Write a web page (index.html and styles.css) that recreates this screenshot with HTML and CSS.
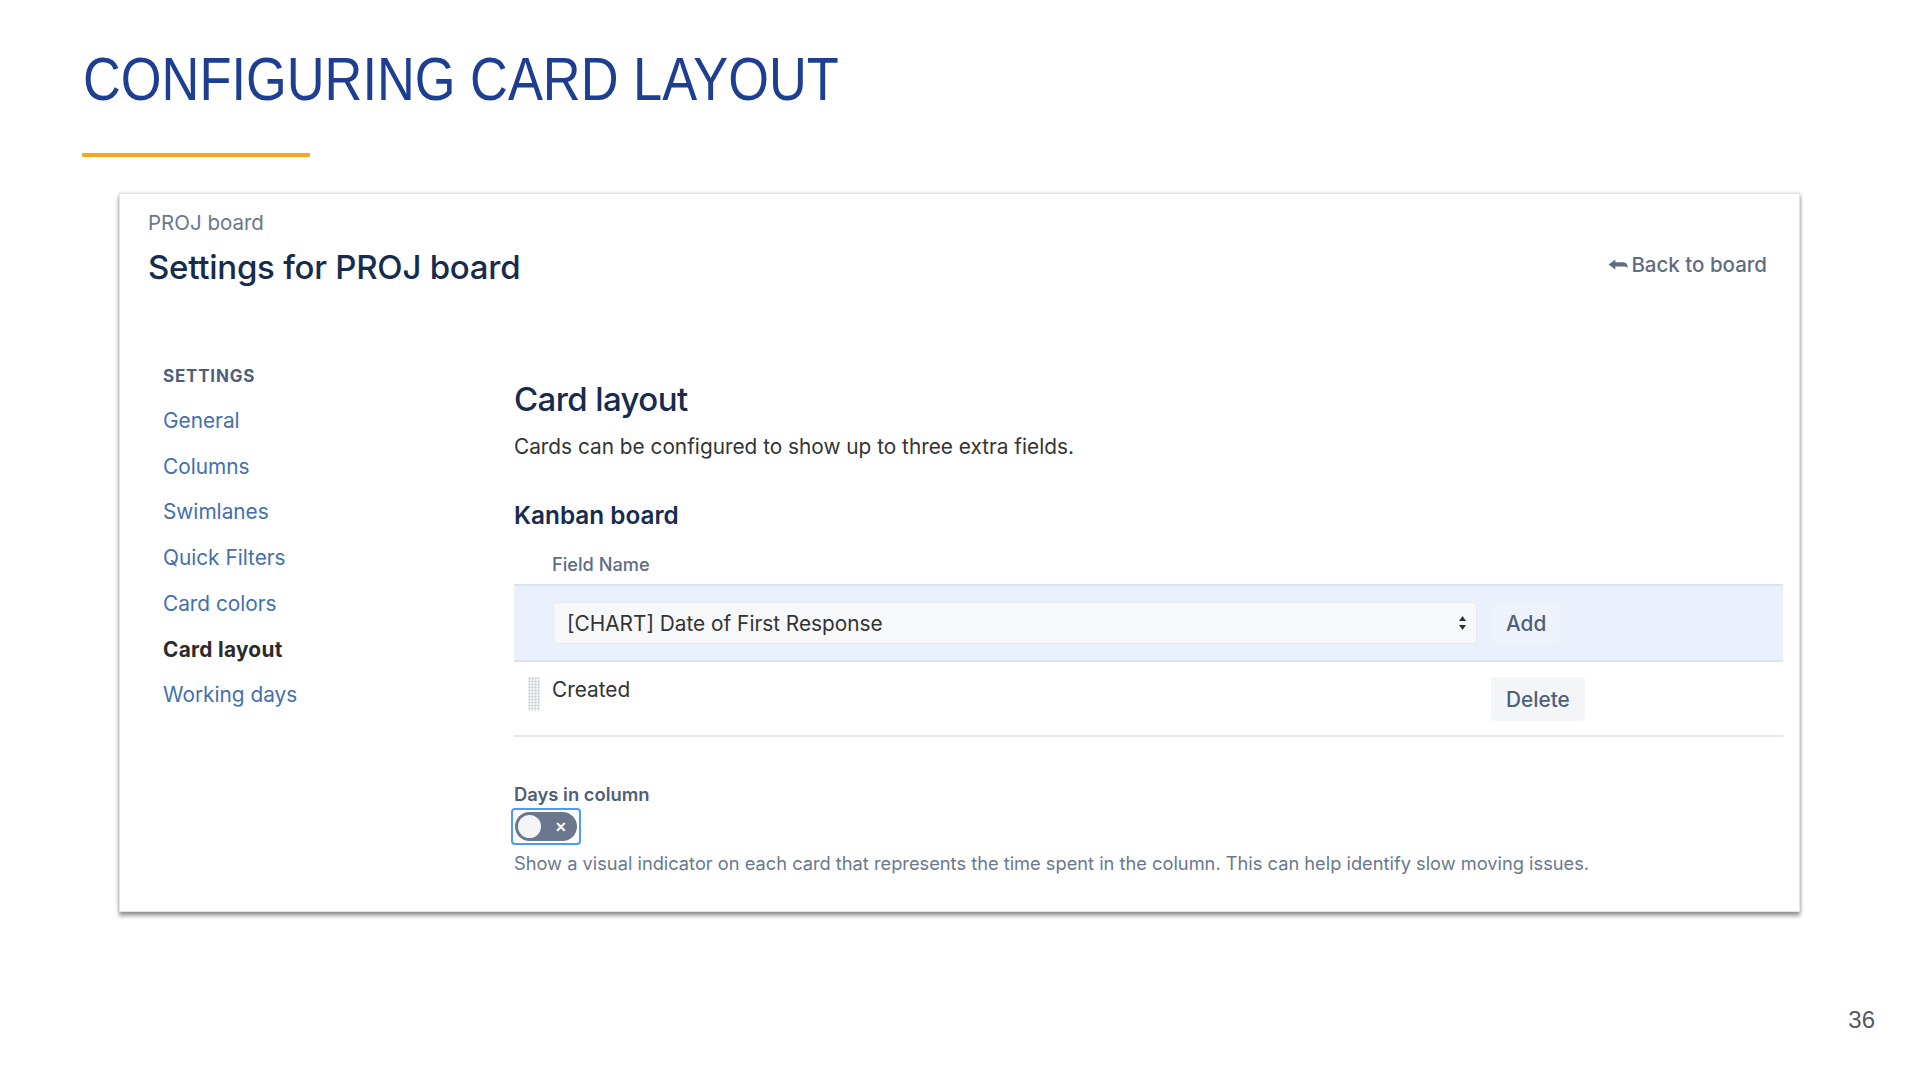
FILE: index.html
```html
<!DOCTYPE html>
<html lang="en">
<head>
<meta charset="utf-8">
<title>Configuring card layout</title>
<link rel="stylesheet" href="styles.css">
</head>
<body>
<div class="slide">
  <h1 class="slide-title">CONFIGURING CARD LAYOUT</h1>
  <div class="title-rule"></div>

  <div class="window">
    <header class="page-header">
      <div class="page-header-main">
        <div class="breadcrumb">PROJ board</div>
        <h2 class="page-title">Settings for PROJ board</h2>
      </div>
      <a class="back-link">
        <svg class="back-icon" width="20" height="12" viewBox="0 0 19 11" aria-hidden="true">
          <path d="M0.5 5 L7 0.3 V3 H14 C17.2 3 18.7 5 18.7 8.3 C17.6 7.2 16.5 7 14 7 H7 V9.7 Z" fill="#5e6c84"/>
        </svg>Back to board</a>
    </header>

    <div class="page-body">
      <nav class="sidebar">
        <div class="sidebar-heading">SETTINGS</div>
        <ul class="nav-list">
          <li><a class="nav-link">General</a></li>
          <li><a class="nav-link">Columns</a></li>
          <li><a class="nav-link">Swimlanes</a></li>
          <li><a class="nav-link">Quick Filters</a></li>
          <li><a class="nav-link">Card colors</a></li>
          <li><span class="nav-link active">Card layout</span></li>
          <li><a class="nav-link">Working days</a></li>
        </ul>
      </nav>

      <main class="content">
        <h3 class="section-title">Card layout</h3>
        <p class="section-desc">Cards can be configured to show up to three extra fields.</p>
        <h4 class="sub-title">Kanban board</h4>

        <div class="field-table">
          <div class="table-head">Field Name</div>
          <div class="row row-add">
            <div class="select">
              <span class="select-text">[CHART] Date of First Response</span>
              <svg class="select-arrows" width="9" height="16" viewBox="0 0 9 16" aria-hidden="true">
                <path d="M4.5 1 L8 6 H1 Z" fill="#333"/>
                <path d="M4.5 15 L8 10 H1 Z" fill="#333"/>
              </svg>
            </div>
            <button class="btn btn-add">Add</button>
          </div>
          <div class="row row-field">
            <span class="drag-handle"></span>
            <span class="field-name">Created</span>
            <button class="btn btn-delete">Delete</button>
          </div>
        </div>

        <div class="days">
          <div class="days-label">Days in column</div>
          <div class="toggle-focus">
            <div class="toggle">
              <span class="knob"></span>
              <span class="toggle-x">&#x2715;</span>
            </div>
          </div>
          <p class="help">Show a visual indicator on each card that represents the time spent in the column. This can help identify slow moving issues.</p>
        </div>
      </main>
    </div>
  </div>

  <div class="page-number">36</div>
</div>
</body>
</html>
```

FILE: styles.css
```css
* { box-sizing: border-box; }

html, body {
  margin: 0;
  padding: 0;
  background: #ffffff;
}

body {
  font-family: Inter, "Noto Sans", "Liberation Sans", sans-serif;
  color: #333333;
}

.slide {
  width: 1920px;
  height: 1080px;
  overflow: hidden;
  padding-top: 48px;
}

.slide-title {
  margin: 0 0 0 83px;
  font-family: "Liberation Sans", Arial, sans-serif;
  font-weight: 400;
  font-size: 62px;
  line-height: 62px;
  color: #1d3e91;
  white-space: nowrap;
  transform: scaleX(0.845);
  transform-origin: left center;
  height: 62px;
}

.title-rule {
  margin: 43px 0 0 82px;
  width: 228px;
  height: 4px;
  background: #f4a623;
  border-radius: 1px;
}

.window {
  margin: 36px 0 0 119px;
  width: 1681px;
  height: 719px;
  background: #ffffff;
  border: 1px solid #e4e4e4;
  box-shadow: 0 4px 4px rgba(0, 0, 0, 0.38), 1px 0 3px rgba(0, 0, 0, 0.12), -1px 0 3px rgba(0, 0, 0, 0.08);
  padding: 17px 16px 0 28px;
}

.page-header {
  display: flex;
  justify-content: space-between;
  align-items: flex-end;
  padding-right: 16px;
}

.breadcrumb {
  font-size: 20.5px;
  line-height: 24px;
  color: #6b778c;
}

.page-title {
  margin: 14px 0 0 0;
  font-size: 33px;
  line-height: 36px;
  font-weight: 500;
  color: #172b4d;
  letter-spacing: -0.25px;
}

.back-link {
  display: flex;
  align-items: center;
  gap: 3px;
  font-size: 20.5px;
  line-height: 24px;
  color: #5e6c84;
  font-weight: 500;
  margin-bottom: 8px;
  text-decoration: none;
}

.back-icon { display: block; }

.page-body {
  display: flex;
  padding-top: 81px;
}

.sidebar {
  width: 366px;
  flex: 0 0 366px;
  padding-left: 15px;
}

.sidebar-heading {
  font-size: 17px;
  line-height: 20px;
  font-weight: 700;
  color: #505f79;
  letter-spacing: 0.8px;
}

.nav-list {
  list-style: none;
  margin: 12px 0 0 0;
  padding: 0;
}

.nav-link {
  display: block;
  font-size: 20.8px;
  line-height: 45.7px;
  color: #4370ab;
  text-decoration: none;
}

.nav-link.active {
  color: #2b2b2b;
  font-weight: 700;
  letter-spacing: 0.3px;
}

.content {
  flex: 1;
  padding-top: 14px;
}

.section-title {
  margin: 0;
  font-size: 33px;
  line-height: 38px;
  font-weight: 500;
  color: #172b4d;
  letter-spacing: -0.6px;
}

.section-desc {
  margin: 16px 0 0 0;
  font-size: 20.8px;
  line-height: 26px;
  color: #333333;
}

.sub-title {
  margin: 41px 0 0 0;
  font-size: 24.3px;
  line-height: 28px;
  font-weight: 600;
  color: #172b4d;
}

.field-table {
  margin-top: 25px;
}

.table-head {
  padding: 0 0 10px 38px;
  font-size: 18.2px;
  line-height: 20px;
  font-weight: 500;
  color: #5e6c84;
}

.row {
  display: flex;
}

.row-add {
  height: 78px;
  align-items: center;
  padding-left: 39px;
  background: #eaf1fc;
  border-top: 2px solid #dde3ec;
  border-bottom: 2px solid #dde3ec;
}

.select {
  width: 924px;
  height: 42px;
  display: flex;
  align-items: center;
  justify-content: space-between;
  padding: 0 9px 0 13px;
  background: #f7f8fa;
  border: 1px solid #e6e9ee;
  border-radius: 4px;
}

.select-text {
  font-size: 20.8px;
  color: #333333;
}

.select-arrows { display: block; }

.btn {
  font-family: inherit;
  font-size: 20.8px;
  font-weight: 500;
  color: #505f79;
  border: none;
  border-radius: 4px;
  padding: 0 15px;
  height: 40px;
}

.btn-add {
  margin-left: 14px;
  background: #eef3fb;
}

.row-field {
  height: 75px;
  align-items: flex-start;
  padding: 15px 0 0 14px;
  border-bottom: 2px solid #e4e6ea;
}

.drag-handle {
  display: block;
  width: 12px;
  height: 34px;
  background-color: #f1f2f4;
  background-image: radial-gradient(circle, #c9cdd3 0.9px, transparent 1.1px);
  background-size: 3px 3px;
}

.field-name {
  flex: 0 0 939px;
  margin-left: 12px;
  font-size: 20.8px;
  line-height: 26px;
  color: #333333;
}

.btn-delete {
  height: 44px;
  padding: 0 15px;
  background: #f4f5f7;
}

.days {
  margin-top: 47px;
}

.days-label {
  font-size: 18.4px;
  line-height: 20px;
  font-weight: 600;
  color: #505f79;
}

.toggle-focus {
  display: inline-block;
  margin: 4px 0 0 -3px;
  padding: 2px;
  border: 2px solid #4c9aff;
  border-radius: 4px;
}

.toggle {
  width: 62px;
  height: 29px;
  border-radius: 15px;
  background: #6b778c;
  display: flex;
  align-items: center;
  justify-content: space-between;
  padding: 0 10px 0 3px;
}

.knob {
  width: 23px;
  height: 23px;
  border-radius: 50%;
  background: #f4f5f7;
}

.toggle-x {
  font-size: 14px;
  font-weight: 700;
  color: #ffffff;
  line-height: 1;
}

.help {
  margin: 8px 0 0 0;
  font-size: 18.25px;
  line-height: 20px;
  color: #6b778c;
}

.page-number {
  margin-top: 94px;
  padding-right: 45px;
  text-align: right;
  font-family: "Liberation Sans", Arial, sans-serif;
  font-size: 24px;
  line-height: 28px;
  color: #595959;
}
```
